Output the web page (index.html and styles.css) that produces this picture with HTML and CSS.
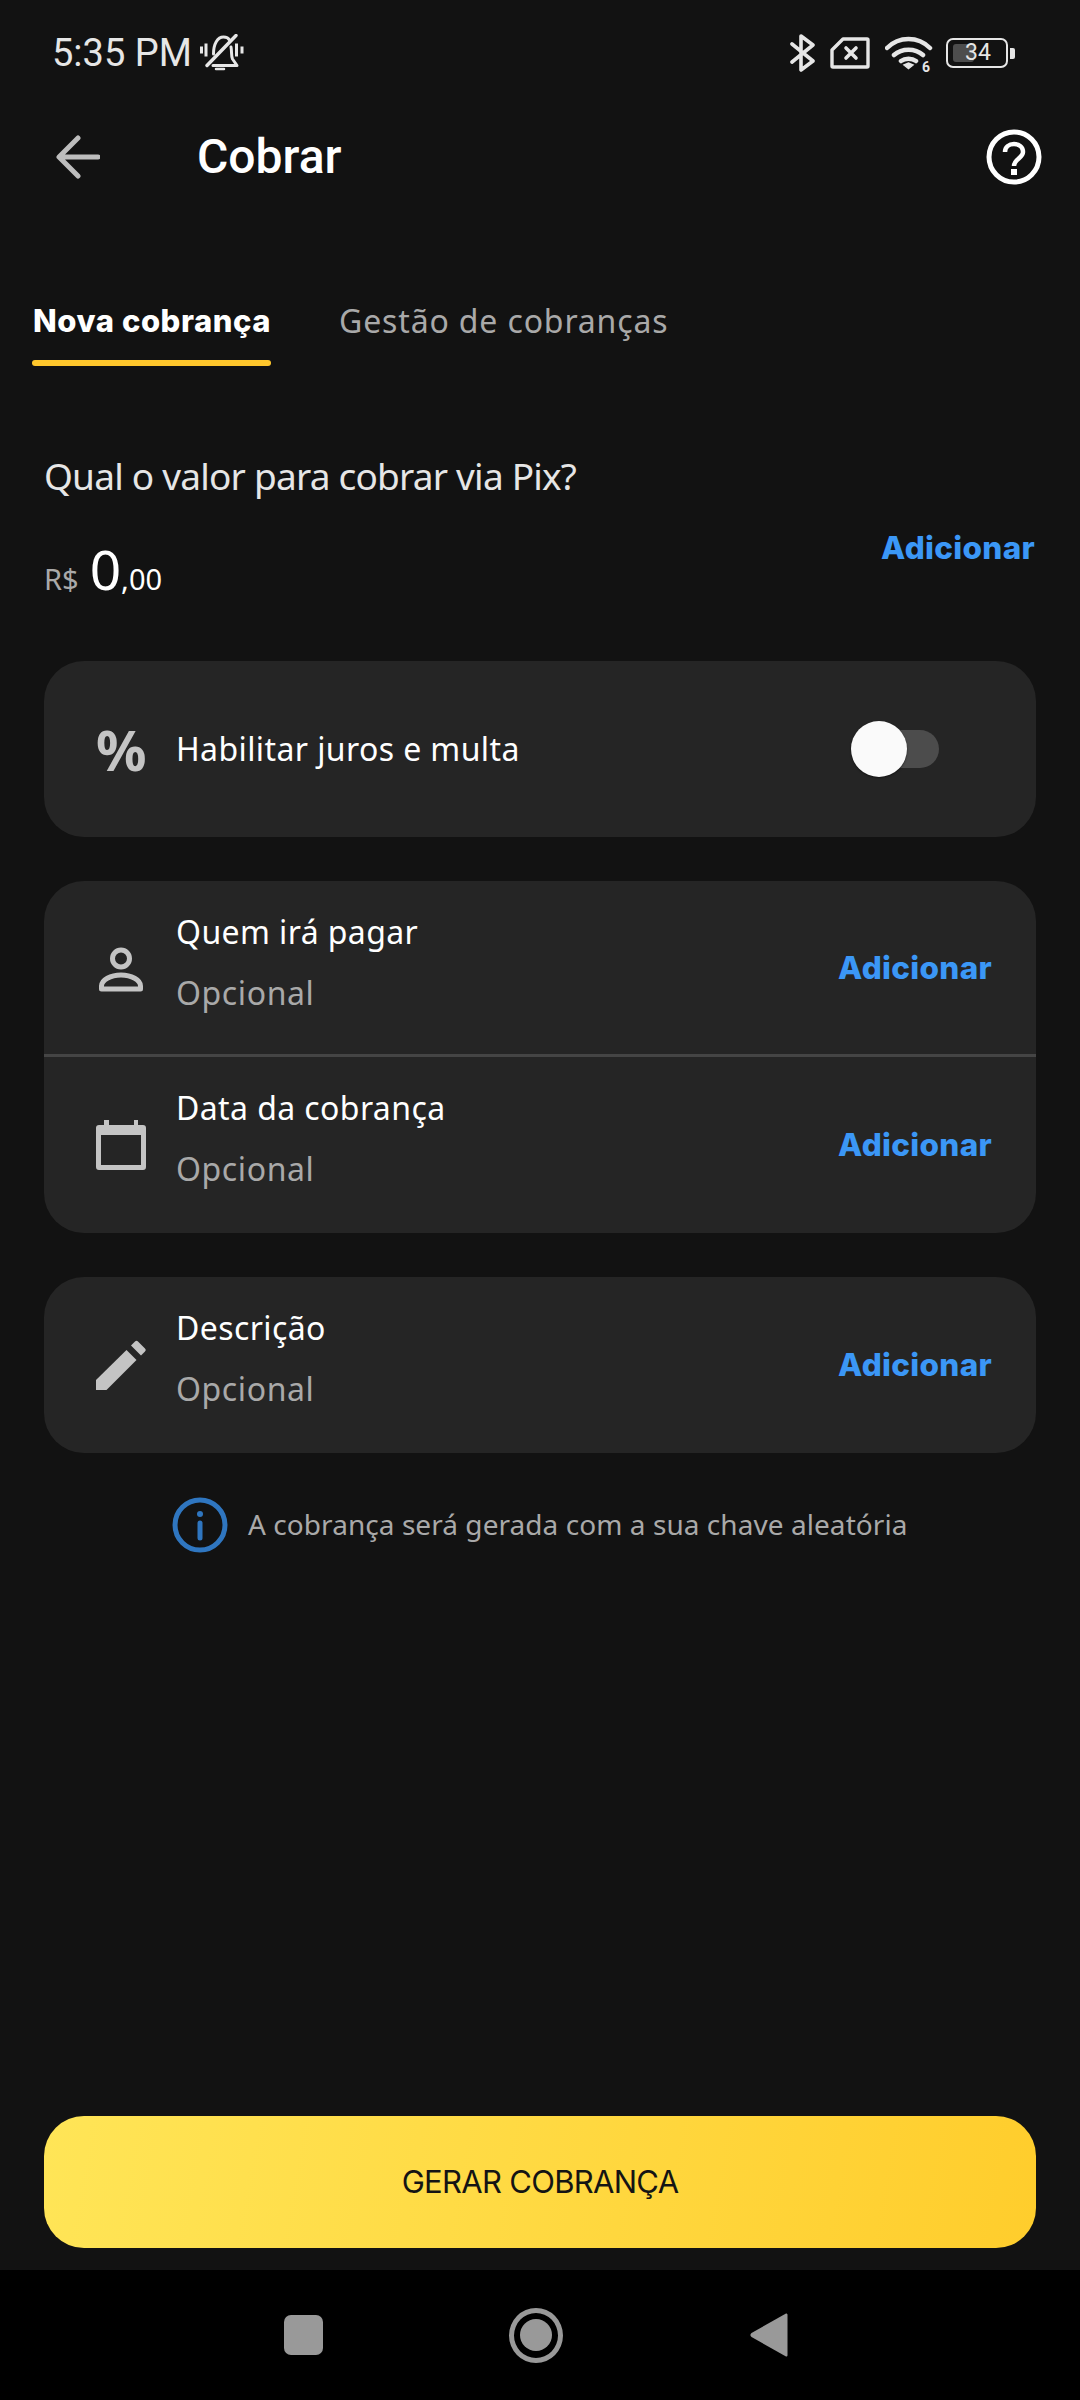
FILE: index.html
```html
<!DOCTYPE html>
<html lang="pt-BR">
<head>
<meta charset="utf-8">
<title>Cobrar</title>
<link rel="stylesheet" href="styles.css">
</head>
<body>
<div class="screen">
  <div class="status">
    <div class="status-left">
      <span class="time">5:35 PM</span>
      <svg class="ic-bell" viewBox="0 0 44 38" fill="none" stroke="#e6e6e6" stroke-width="3" stroke-linecap="round" stroke-linejoin="round">
        <path d="M1.500 12.500v7M6 9.500v13M36.500 9.500v13M42 12.500v7" stroke-width="3" stroke-linecap="butt"/>
        <path d="M13.500 20c0-10 4-17 10-17 3 0 5 1 6 3M31 13c1 5 0 9 1.500 12l4.500 6.500H13"/>
        <path d="M36 1.500 7 31.500" stroke-width="3.400"/>
        <path d="M16 35h8" stroke-width="2.500"/>
      </svg>
    </div>
    <div class="status-right">
      <svg class="ic-bt" viewBox="0 0 26 38" fill="none" stroke="#e6e6e6" stroke-width="3.600" stroke-linecap="round" stroke-linejoin="round"><path d="M2 10 23 27 11 36V2l12 9L2 28"/></svg>
      <svg class="ic-sim" viewBox="0 0 40 32" fill="none" stroke="#e6e6e6" stroke-width="3.400" stroke-linejoin="round"><path d="M13 2h24a1 1 0 0 1 1 1v26a1 1 0 0 1-1 1H3a1 1 0 0 1-1-1V13z"/><path d="m16 11 10 10m0-10L16 21" stroke-linecap="round" stroke-width="3.600"/></svg>
      <svg class="ic-wifi" viewBox="0 0 48 36" fill="none" stroke="#e6e6e6" stroke-width="4.500" stroke-linecap="round"><path d="M2 13C14 1 33 1 45 13M9 20c8-7 21-7 29 0M16 26c4-3 11-3 15 0"/><path d="m19 30 4.500-2 4.500 2-4.500 3.500z" fill="#e6e6e6" stroke-width="1.500"/></svg>
      <span class="wifi-num">6</span>
      <div class="battery"><span class="battery-fill"></span><span class="battery-num">34</span></div>
      <span class="battery-tip"></span>
    </div>
  </div>

  <div class="appbar">
    <svg class="ic-back" viewBox="0 0 44 44" fill="none" stroke="#bdbdbd" stroke-width="5" stroke-linecap="round" stroke-linejoin="round"><path d="M42 22H4M22 3 3 22l19 19"/></svg>
    <h1 class="title">Cobrar</h1>
    <svg class="ic-help" viewBox="0 0 56 56" fill="none" stroke="#fff" stroke-width="5"><circle cx="28" cy="28" r="25"/><path d="M19 23c0-5 4-8 9-8s9 3 9 8c0 6-9 7-9 14" stroke-width="4.500"/><path d="M25 40h6v6h-6z" fill="#fff" stroke="none"/></svg>
  </div>

  <div class="tabs">
    <div class="tab tab-active">Nova cobrança</div>
    <div class="tab">Gestão de cobranças</div>
  </div>

  <main class="content">
    <p class="question">Qual o valor para cobrar via Pix?</p>
    <div class="amount-row">
      <div class="amount"><span class="cur">R$</span><span class="int">0</span><span class="dec">,00</span></div>
      <span class="link link-amount">Adicionar</span>
    </div>

    <section class="card card-toggle">
      <span class="percent">%</span>
      <span class="row-title">Habilitar juros e multa</span>
      <div class="switch"><span class="switch-thumb"></span></div>
    </section>

    <section class="card">
      <div class="row row-first">
        <svg class="row-ic" viewBox="0 0 80 80" fill="none" stroke="#c4c4c4" stroke-width="5"><circle cx="40" cy="30.500" r="8.500"/><path d="M20.500 61v-3c0-6 9-11 19.500-11s19.500 5 19.500 11v3z" stroke-linejoin="round"/></svg>
        <div class="row-text"><span class="row-title">Quem irá pagar</span><span class="row-sub">Opcional</span></div>
        <span class="link">Adicionar</span>
      </div>
      <div class="divider"></div>
      <div class="row">
        <svg class="row-ic" viewBox="0 0 80 80" fill="#c4c4c4"><path fill-rule="evenodd" d="M23 15h5v5h25v-5h4v5h5a3 3 0 0 1 3 3v39a3 3 0 0 1-3 3H18a3 3 0 0 1-3-3V23a3 3 0 0 1 3-3h5zM20 30v30h40V30z"/></svg>
        <div class="row-text"><span class="row-title">Data da cobrança</span><span class="row-sub">Opcional</span></div>
        <span class="link">Adicionar</span>
      </div>
    </section>

    <section class="card">
      <div class="row">
        <svg class="row-ic" viewBox="1 4.500 80 80" fill="#c4c4c4"><path d="M16 59.500v10h10.500l30-30-10-10z"/><path d="M51 25l4-4a2 2 0 0 1 3 0l7 7a2 2 0 0 1 0 3l-4 4z"/></svg>
        <div class="row-text"><span class="row-title">Descrição</span><span class="row-sub">Opcional</span></div>
        <span class="link">Adicionar</span>
      </div>
    </section>

    <div class="info">
      <svg class="ic-info" viewBox="0 0 56 56" fill="none" stroke="#2f76c0" stroke-width="5"><circle cx="28" cy="28" r="25"/><path d="M28 26v15" stroke-linecap="round"/><circle cx="28" cy="17" r="3" fill="#2f76c0" stroke="none"/></svg>
      <span class="info-text">A cobrança será gerada com a sua chave aleatória</span>
    </div>
  </main>

  <div class="footer"><button class="cta">GERAR COBRANÇA</button></div>

  <nav class="navbar">
    <span class="nav-square"></span>
    <span class="nav-circle"><span class="nav-dot"></span></span>
    <svg class="nav-back" viewBox="0 0 38 46" fill="#999"><path d="M36 1.500c1 0 1.500.5 1.500 1.500v40c0 1-.5 1.500-1.500 1.500L1.500 25c-1.500-1-1.500-3 0-4z"/></svg>
  </nav>
</div>
</body>
</html>
```
FILE: styles.css
```css
* { box-sizing: border-box; }
html, body { margin: 0; padding: 0; }
body { background: #121212; font-family: "Noto Sans", "Lato", sans-serif; color: #fff; }
.screen { width: 1080px; height: 2400px; display: flex; flex-direction: column; background: #121212; overflow: hidden; }

.status { height: 106px; padding: 30px 65px 0 52px; display: flex; justify-content: space-between; align-items: flex-start; }
.status-left { display: flex; align-items: center; gap: 8px; height: 46px; }
.time { font: 400 38px/46px "Roboto", sans-serif; color: #e6e6e6; }
.ic-bell { width: 44px; height: 38px; }
.status-right { display: flex; align-items: center; height: 46px; position: relative; }
.ic-bt { width: 26px; height: 38px; margin-right: 14px; }
.ic-sim { width: 40px; height: 32px; margin-right: 15px; }
.ic-wifi { width: 48px; height: 36px; margin-right: 13px; }
.wifi-num { position: absolute; left: 132px; top: 29px; font: 700 14px/16px "Roboto", sans-serif; color: #e6e6e6; }
.battery { width: 62px; height: 30px; border: 2.500px solid #e6e6e6; border-radius: 7px; position: relative; display: flex; align-items: center; justify-content: center; }
.battery-fill { position: absolute; left: 5px; top: 4px; bottom: 4px; width: 21px; background: #4d4d4d; border-radius: 3px; }
.battery-num { position: relative; font: 400 23px/24px "Roboto", sans-serif; color: #e6e6e6; margin-left: 2px; }
.battery-tip { width: 5px; height: 11px; background: #e6e6e6; border-radius: 0 2px 2px 0; margin-left: 2px; }

.appbar { height: 102px; display: flex; align-items: center; padding: 0 38px 0 56px; }
.ic-back { width: 44px; height: 44px; margin-right: 97px; }
.title { margin: 0; flex: 1; font: 500 48px/56px "Roboto", sans-serif; color: #fff; }
.ic-help { width: 56px; height: 56px; }

.tabs { display: flex; gap: 68px; padding: 0 0 0 33px; margin-top: 90px; }
.tab { height: 68px; padding-top: 1px; font-size: 32px; line-height: 44px; color: #a9a9a9; letter-spacing: 0.850px; }
.tab-active { font-family: "Inter", sans-serif; font-size: 31px; font-weight: 800; color: #fff; position: relative; letter-spacing: 0.550px; }
.tab-active::after { content: ""; position: absolute; left: -1px; right: 0; bottom: 0; height: 6px; border-radius: 3px; background: #ffc72c; }

.content { flex: 1; padding: 0 44px; display: flex; flex-direction: column; }
.question { margin: 87px 0 0; font-size: 37px; line-height: 46px; color: #e6e6e6; letter-spacing: -0.780px; }
.amount-row { display: flex; justify-content: space-between; align-items: flex-start; height: 162px; }
.amount { display: flex; align-items: baseline; padding-top: 35px; line-height: 70px; }
.cur { font-size: 29px; color: #a9a9a9; margin-right: 11px; }
.int { font-size: 55px; color: #fff; }
.dec { font-size: 29px; color: #fff; }
.link { font: 800 31.500px/40px "Inter", sans-serif; color: #3b97f6; letter-spacing: 0.300px; }
.link-amount { margin-top: 29px; margin-right: 1px; }

.card { background: #252525; border-radius: 40px; margin-bottom: 44px; }
.card-toggle { height: 176px; display: flex; align-items: center; padding-left: 52px; position: relative; }
.percent { width: 80px; font: 700 56px/60px "Noto Sans", sans-serif; color: #c4c4c4; }
.switch { position: absolute; left: 807px; top: 60px; width: 88px; height: 56px; }
.switch::before { content: ""; position: absolute; left: 8px; right: 0; top: 9px; height: 38px; border-radius: 19px; background: #4c4c4c; }
.switch-thumb { position: absolute; left: 0; top: 0; width: 56px; height: 56px; border-radius: 50%; background: #fafafa; box-shadow: 0 1px 2px rgba(0,0,0,.5); }

.row { height: 176px; display: flex; align-items: center; padding: 0 44px 0 37px; }
.row-first { height: 173px; }
.row-ic { width: 80px; height: 80px; margin-right: 15px; flex: none; }
.row-text { flex: 1; display: flex; flex-direction: column; gap: 15px; align-self: flex-start; margin-top: 28px; }
.row-title { font-size: 32px; line-height: 46px; color: #fff; letter-spacing: 0.400px; }
.row-sub { font-size: 32px; line-height: 46px; color: #a9a9a9; letter-spacing: 0.600px; }
.divider { height: 3px; background: #454545; }

.info { display: flex; align-items: center; gap: 20px; padding-left: 128px; }
.ic-info { width: 56px; height: 56px; }
.info-text { font-size: 28px; line-height: 38px; color: #a9a9a9; letter-spacing: 0.060px; padding-bottom: 2px; }

.footer { padding: 0 44px 22px; }
.cta { display: block; width: 992px; height: 132px; border: 0; border-radius: 40px; background: linear-gradient(100deg, #ffe557 0%, #ffcd2c 100%); color: #141414; font: 400 31px/40px "Inter", sans-serif; letter-spacing: -0.700px; padding: 0; }

.navbar { height: 130px; background: #000; display: flex; align-items: center; flex: none; padding-left: 284px; }
.nav-square { width: 39px; height: 40px; background: #999; border-radius: 7px; margin-right: 186px; }
.nav-circle { width: 54px; height: 55px; border: 5px solid #999; border-radius: 50%; display: flex; align-items: center; justify-content: center; margin-right: 187px; }
.nav-dot { width: 32px; height: 32px; border-radius: 50%; background: #999; }
.nav-back { width: 38px; height: 46px; }
```
